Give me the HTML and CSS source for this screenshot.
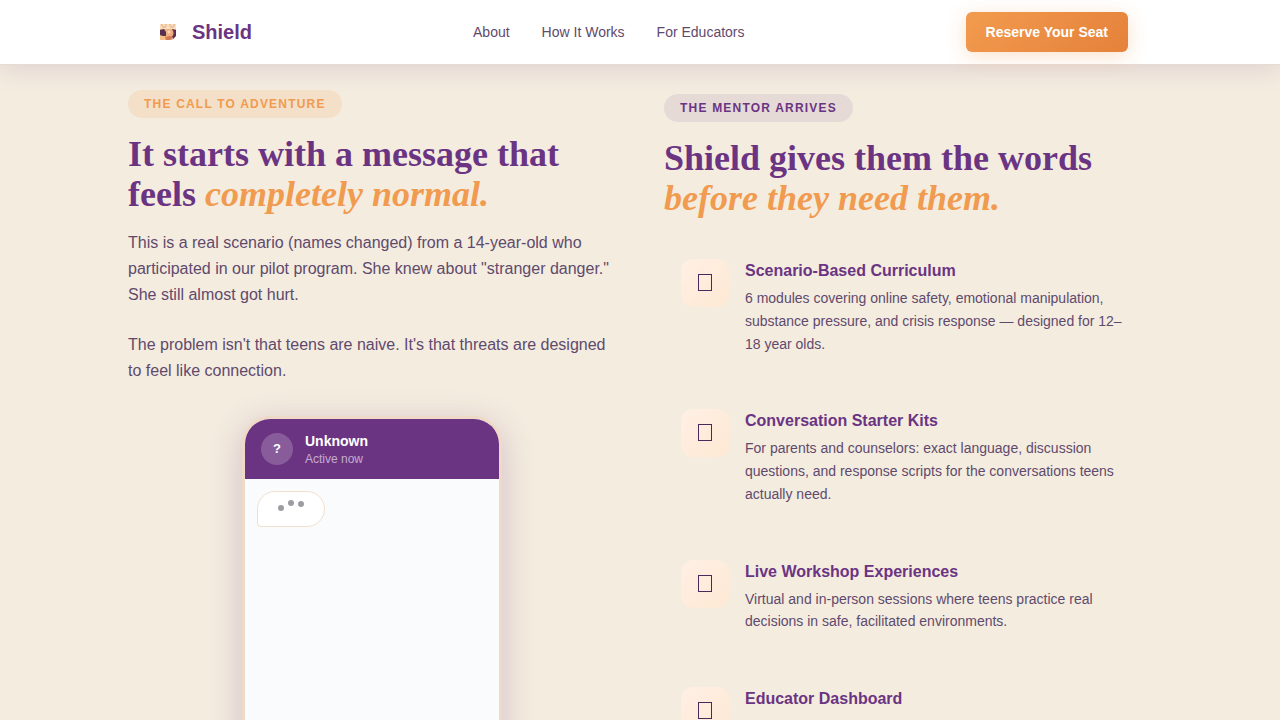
FILE: index.html
```html
<!DOCTYPE html>
<html lang="en">
<head>
    <meta charset="utf-8">
    <meta name="viewport" content="width=device-width, initial-scale=1.0">
    <title>Shield</title>
    <link rel="stylesheet" href="styles.css">
</head>
<body>

    <header class="navbar">
        <div class="nav-inner">
            <a href="#" class="logo">
                <svg class="logo-img" viewBox="0 0 32 32" aria-hidden="true">
                    <path d="M8 8h16v5h-16z" fill="#f9dfc0"/>
                    <path d="M9 9h2M13 9h2M17 9h2M21 9h2M10 11h4M18 11h4" stroke="#e2a579" stroke-width="1"/>
                    <path d="M8 13h16v7l-4 4h-8l-4-4z" fill="#f0b183"/>
                    <path d="M8 14l4-1 2 3 0 4-3 0-3-1z" fill="#56304f"/>
                    <path d="M20 13l4 1v6l-3 3-1-3 1-4z" fill="#5f3050"/>
                    <path d="M8 20l3 0 4 3-1 1h-6z" fill="#f6bf86"/>
                    <circle cx="18" cy="17" r="3.5" fill="#f2ac80"/>
                    <path d="M13 21l5-1 3 1-3 3h-4z" fill="#d07a58"/>
                    <circle cx="17" cy="16" r="1.5" fill="#fbdcc0"/>
                </svg>
                <span>Shield</span>
            </a>
            <nav class="nav-links">
                <a href="#about">About</a>
                <a href="#how">How It Works</a>
                <a href="#educators">For Educators</a>
            </nav>
            <button type="button" class="btn-primary">Reserve Your Seat</button>
        </div>
    </header>

    <main class="columns">

        <section class="story" id="about">
            <span class="badge badge-orange">THE CALL TO ADVENTURE</span>
            <h2>It starts with a message that feels <em>completely normal.</em></h2>
            <p>This is a real scenario (names changed) from a 14-year-old who participated in our pilot program. She knew about "stranger danger." She still almost got hurt.</p>
            <p>The problem isn't that teens are naive. It's that threats are designed to feel like connection.</p>

            <div class="phone">
                <div class="phone-header">
                    <div class="avatar">?</div>
                    <div>
                        <div class="contact-name">Unknown</div>
                        <div class="contact-status">Active now</div>
                    </div>
                </div>
                <div class="phone-body">
                    <div class="typing">
                        <span class="dot"></span>
                        <span class="dot"></span>
                        <span class="dot"></span>
                    </div>
                </div>
            </div>
        </section>

        <section class="mentor" id="how">
            <span class="badge badge-purple">THE MENTOR ARRIVES</span>
            <h2>Shield gives them the words <em>before they need them.</em></h2>

            <div class="features">
                <article class="feature">
                    <div class="feature-icon"><svg viewBox="0 0 14 18"><rect x="0.5" y="0.5" width="13" height="16"/></svg></div>
                    <div>
                        <h3>Scenario-Based Curriculum</h3>
                        <p>6 modules covering online safety, emotional manipulation, substance pressure, and crisis response — designed for 12–18 year olds.</p>
                    </div>
                </article>
                <article class="feature">
                    <div class="feature-icon"><svg viewBox="0 0 14 18"><rect x="0.5" y="0.5" width="13" height="16"/></svg></div>
                    <div>
                        <h3>Conversation Starter Kits</h3>
                        <p>For parents and counselors: exact language, discussion questions, and response scripts for the conversations teens actually need.</p>
                    </div>
                </article>
                <article class="feature">
                    <div class="feature-icon"><svg viewBox="0 0 14 18"><rect x="0.5" y="0.5" width="13" height="16"/></svg></div>
                    <div>
                        <h3>Live Workshop Experiences</h3>
                        <p>Virtual and in-person sessions where teens practice real decisions in safe, facilitated environments.</p>
                    </div>
                </article>
                <article class="feature" id="educators">
                    <div class="feature-icon"><svg viewBox="0 0 14 18"><rect x="0.5" y="0.5" width="13" height="16"/></svg></div>
                    <div>
                        <h3>Educator Dashboard</h3>
                    </div>
                </article>
            </div>
        </section>

    </main>

</body>
</html>
```
FILE: styles.css
```css
*
{
    box-sizing: border-box;
    margin: 0;
    padding: 0;
}

body
{
    height: 100vh;
    overflow: hidden;
    background: #f4ecdf;
    color: #5f4a6d;
    font: 16px/26px "Liberation Sans", Arial, sans-serif;
}

a
{
    color: inherit;
    text-decoration: none;
}

/* Top bar */
.navbar
{
    background: #ffffff;
    border-bottom: 1px solid #e7dcd4;
    box-shadow: 0 4px 24px rgba(107, 52, 131, 0.15);
}
.nav-inner
{
    display: flex;
    align-items: center;
    justify-content: space-between;
    max-width: 1024px;
    height: 64px;
    margin: 0 auto;
    padding: 0 24px;
}
.logo
{
    display: flex;
    align-items: center;
    gap: 8px;
    color: #6b3483;
    font-size: 20px;
    font-weight: bold;
}
.logo-img
{
    width: 32px;
    height: 32px;
}
.nav-links
{
    display: flex;
    gap: 32px;
    font-size: 14px;
}
.btn-primary
{
    padding: 0 20px;
    height: 40px;
    border: none;
    border-radius: 6px;
    background: linear-gradient(135deg, #f29b4f, #e5813a);
    box-shadow: 0 4px 20px rgba(240, 155, 79, 0.3);
    color: #ffffff;
    font: bold 14px "Liberation Sans", Arial, sans-serif;
}

/* Two columns */
.columns
{
    display: grid;
    grid-template-columns: 1fr 1fr;
    gap: 48px;
    max-width: 1024px;
    margin: 0 auto;
}
.story
{
    padding-top: 25px;
}
.mentor
{
    padding-top: 29px;
}
.badge
{
    display: block;
    width: fit-content;
    padding: 6px 16px;
    margin-bottom: 16px;
    border-radius: 14px;
    font-size: 12px;
    line-height: 16px;
    font-weight: bold;
    letter-spacing: 1.2px;
}
.badge-orange
{
    background: #f4dfc8;
    color: #f09b4f;
}
.badge-purple
{
    background: #e6dad6;
    color: #6b3483;
}
h2
{
    margin-bottom: 16px;
    color: #6b3483;
    font: bold 36px/40px "Liberation Serif", "Times New Roman", serif;
}
h2 em
{
    color: #f09b4f;
}
.story p
{
    margin-bottom: 24px;
}

/* Phone mockup */
.phone
{
    width: 260px;
    height: 520px;
    margin: 32px auto 0;
    border: 3px solid #eedac6;
    border-radius: 28px;
    overflow: hidden;
    background: #fafbfd;
    box-shadow: 0 8px 32px rgba(107, 52, 131, 0.25);
}
.phone-header
{
    display: flex;
    align-items: center;
    gap: 12px;
    height: 60px;
    padding: 0 16px;
    background: #6b3483;
    color: #ffffff;
}
.avatar
{
    width: 32px;
    height: 32px;
    border-radius: 50%;
    background: rgba(255, 255, 255, 0.2);
    font-size: 13px;
    line-height: 32px;
    font-weight: bold;
    text-align: center;
}
.contact-name
{
    font-size: 14px;
    line-height: 20px;
    font-weight: bold;
}
.contact-status
{
    color: rgba(255, 255, 255, 0.6);
    font-size: 12px;
    line-height: 16px;
}
.phone-body
{
    padding: 12px;
}
.typing
{
    display: flex;
    align-items: center;
    justify-content: center;
    gap: 4px;
    width: 68px;
    height: 36px;
    border: 1px solid #f0dfcd;
    border-radius: 18px 18px 18px 4px;
    background: #ffffff;
}
/* dots are caught mid-bounce */
.dot
{
    width: 6px;
    height: 6px;
    border-radius: 50%;
    background: #9e9ca1;
    transform: translateY(-1px);
}
.dot:nth-child(2)
{
    transform: translateY(-6px);
}
.dot:nth-child(3)
{
    transform: translateY(-5px);
}

/* Feature list */
.features
{
    display: grid;
    gap: 20px;
    margin-top: 24px;
}
.feature
{
    display: flex;
    align-items: flex-start;
    gap: 16px;
    padding: 16px;
    border: 1px solid transparent;
}
.feature-icon
{
    display: flex;
    align-items: center;
    justify-content: center;
    flex-shrink: 0;
    width: 48px;
    height: 48px;
    border-radius: 12px;
    background: linear-gradient(135deg, #fff0e5, #fde8d3);
}
.feature-icon svg
{
    width: 14px;
    height: 18px;
    fill: none;
    stroke: #4a2a5c;
}
.feature h3
{
    margin-bottom: 4px;
    color: #6b3483;
    font-size: 16px;
    line-height: 24px;
}
.feature p
{
    font-size: 14px;
    line-height: 1.625;
}
```
